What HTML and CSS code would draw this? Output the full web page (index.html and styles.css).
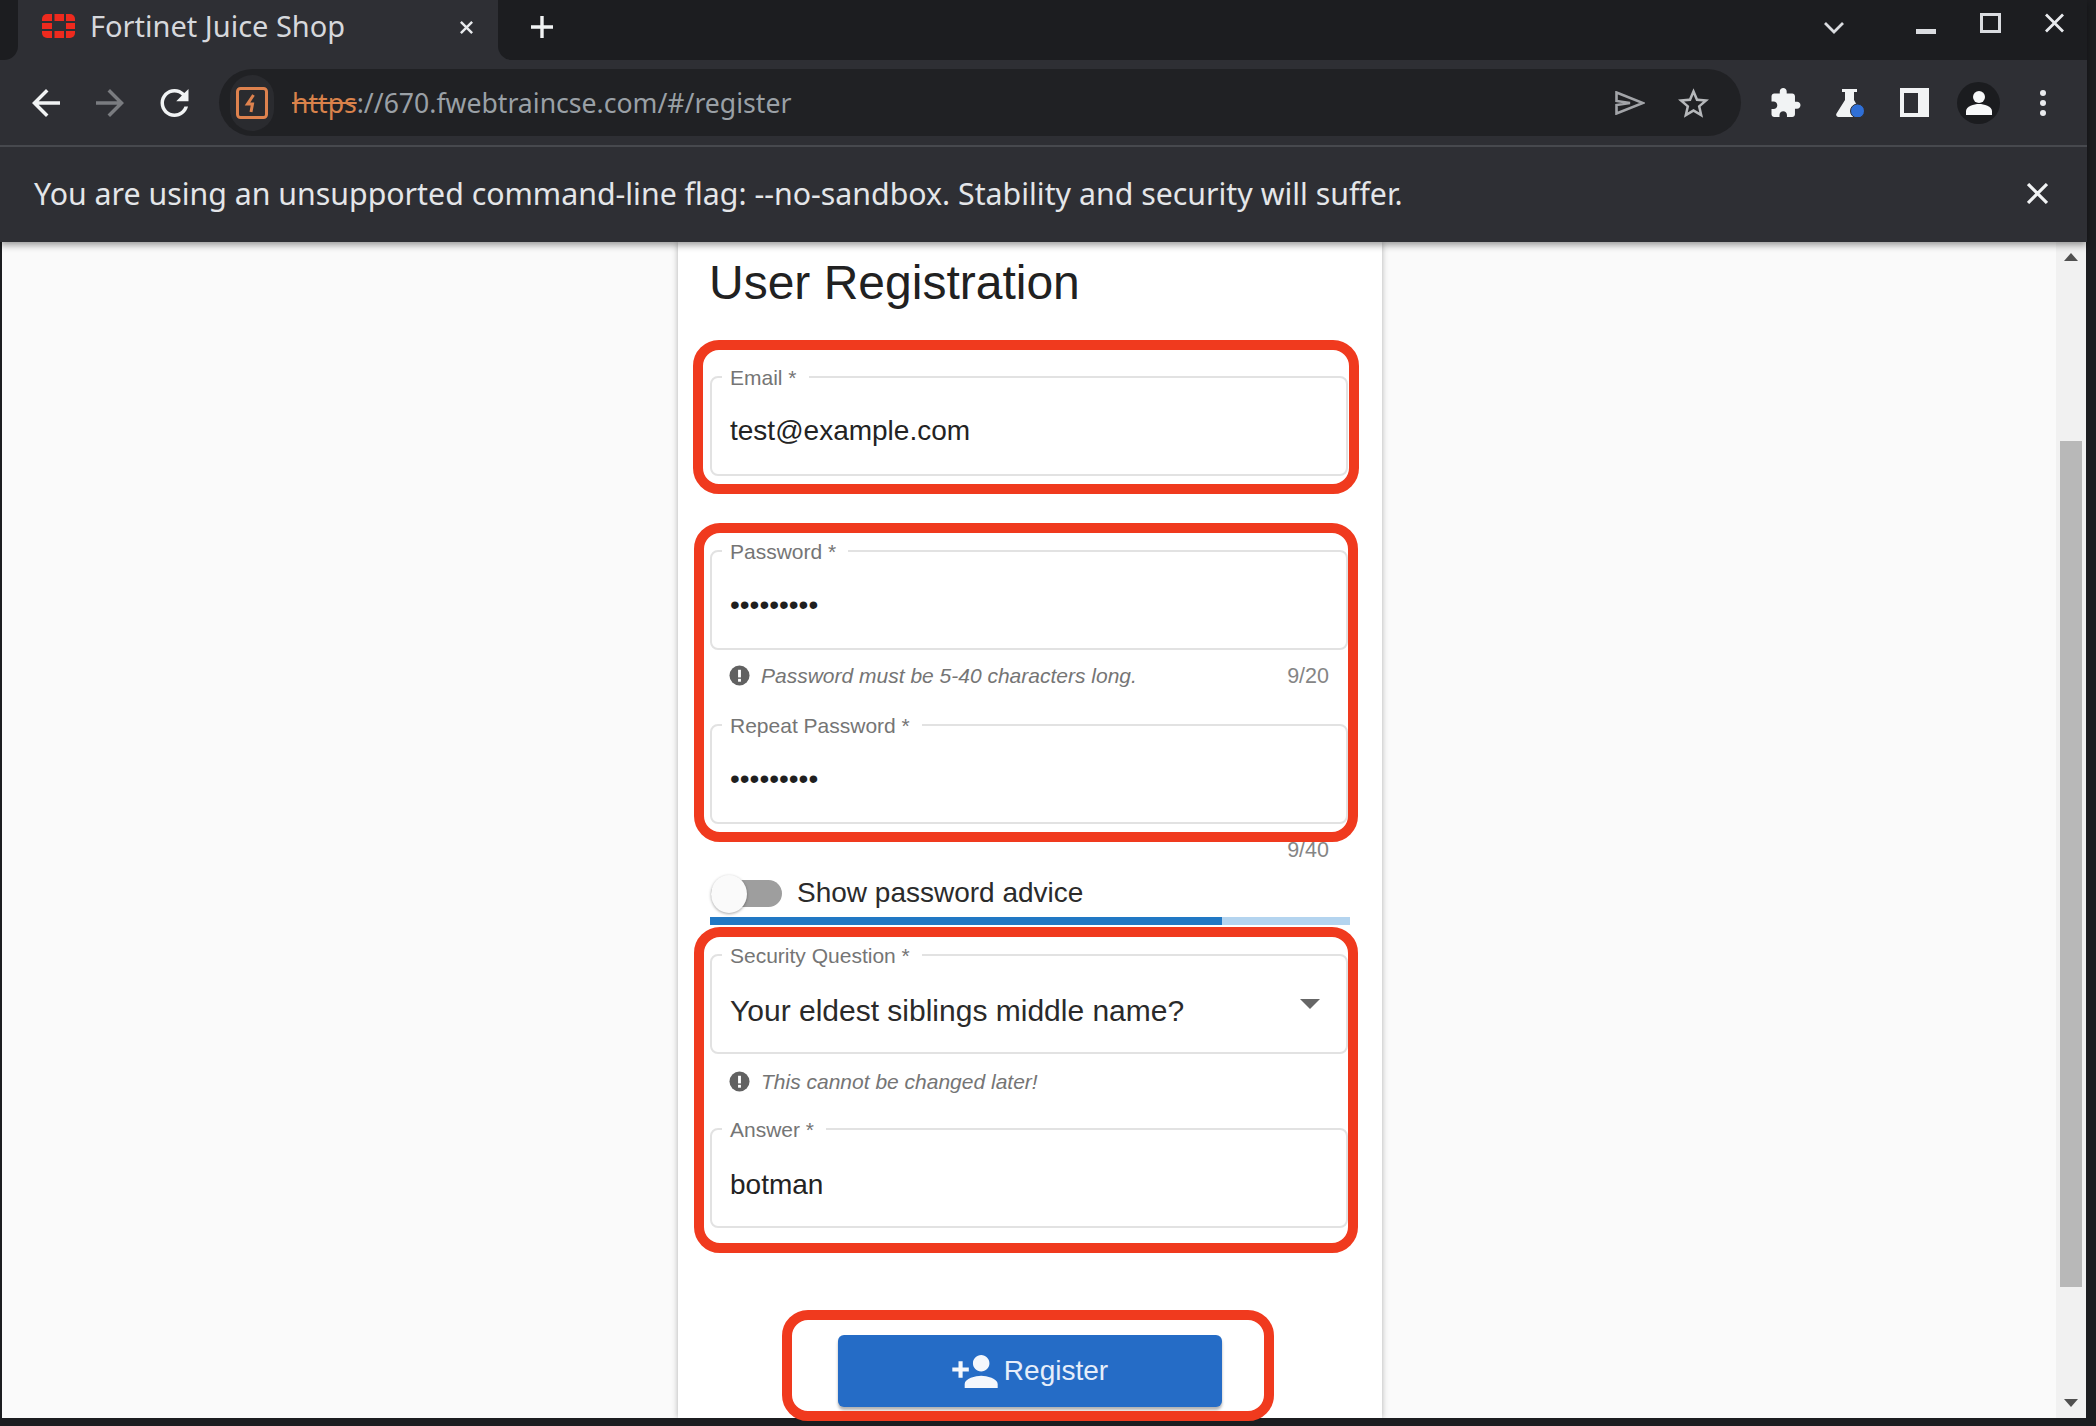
FILE: index.html
```html
<!DOCTYPE html>
<html lang="en">
<head>
<meta charset="utf-8">
<title>Fortinet Juice Shop</title>
<link rel="stylesheet" href="styles.css">
</head>
<body>
<div class="window">
  <header class="browser">
    <div class="tabstrip">
      <div class="strip-lead"></div>
      <div class="tab">
        <svg class="favicon" viewBox="0 0 33 24" aria-hidden="true">
          <g fill="#ee2a1e">
            <path d="M0 7V5a5 5 0 0 1 5-5h5v7H0z"/>
            <rect x="12.500" y="0" width="9.500" height="7"/>
            <path d="M33 7V5a5 5 0 0 0-5-5h-4v7h9z"/>
            <rect x="0" y="9" width="10" height="6"/>
            <rect x="24" y="9" width="9" height="6"/>
            <path d="M0 17v2a5 5 0 0 0 5 5h5v-7H0z"/>
            <rect x="12.500" y="17" width="9.500" height="7"/>
            <path d="M33 17v2a5 5 0 0 1-5 5h-4v-7h9z"/>
          </g>
        </svg>
        <span class="tab-title">Fortinet Juice Shop</span>
        <svg class="tab-close" viewBox="0 0 16 16" aria-hidden="true"><path d="M2 2l12 12M14 2L2 14"/></svg>
      </div>
      <div class="strip-rest">
        <svg class="new-tab" viewBox="0 0 24 24" aria-hidden="true"><path d="M12 1v22M1 12h22"/></svg>
        <div class="strip-controls">
          <svg class="tab-search" viewBox="0 0 20 12" aria-hidden="true"><path d="M1 1l9 9 9-9"/></svg>
          <svg class="win-min" viewBox="0 0 20 5" aria-hidden="true"><rect width="20" height="5"/></svg>
          <svg class="win-max" viewBox="0 0 21 20" aria-hidden="true"><path d="M1.500 1.500h18v17h-18z"/></svg>
          <svg class="win-close" viewBox="0 0 20 20" aria-hidden="true"><path d="M1 1l18 18M19 1L1 19"/></svg>
        </div>
      </div>
    </div>
    <div class="toolbar">
      <svg class="tool-icon nav-back" viewBox="4 4 16 16" aria-hidden="true"><path d="M20 11H7.830l5.590-5.590L12 4l-8 8 8 8 1.410-1.410L7.830 13H20v-2z"/></svg>
      <svg class="tool-icon nav-forward" viewBox="4 4 16 16" aria-hidden="true"><path d="M4 11h12.170l-5.590-5.590L12 4l8 8-8 8-1.410-1.410L16.170 13H4v-2z"/></svg>
      <svg class="tool-icon nav-reload" viewBox="4 4 16 16" aria-hidden="true"><path d="M17.650 6.350C16.200 4.900 14.210 4 12 4c-4.420 0-7.990 3.580-7.990 8s3.570 8 7.990 8c3.730 0 6.840-2.550 7.730-6h-2.080c-.82 2.330-3.040 4-5.650 4-3.310 0-6-2.690-6-6s2.690-6 6-6c1.660 0 3.140.69 4.220 1.780L13 11h7V4l-2.350 2.350z"/></svg>
      <div class="omnibox">
        <span class="site-chip">
          <svg class="site-icon" viewBox="0 0 32 32" aria-hidden="true">
            <rect class="site-frame" x="1.500" y="1.500" width="29" height="29" rx="3"/>
            <path class="site-bolt" d="M17.500 8l-6 9h5l-1.500 8"/>
          </svg>
        </span>
        <span class="url"><span class="url-scheme">https</span>://670.fwebtraincse.com/#/register</span>
        <svg class="omni-send" viewBox="0 0 30 24" aria-hidden="true"><path d="M1.500 1.500L28 12 1.500 22.500V14L15 12 1.500 10z"/></svg>
        <svg class="omni-star" viewBox="2 2 20 19" aria-hidden="true"><path d="M22 9.240l-7.190-.62L12 2 9.190 8.630 2 9.240l5.460 4.730L5.820 21 12 17.270 18.180 21l-1.630-7.030L22 9.240zM12 15.400l-3.760 2.270 1-4.280-3.320-2.880 4.380-.38L12 6.100l1.710 4.040 4.380.38-3.320 2.880 1 4.280L12 15.400z"/></svg>
      </div>
      <svg class="ext-puzzle" viewBox="2 1 21 21" aria-hidden="true"><path d="M20.500 11H19V7c0-1.100-.9-2-2-2h-4V3.500C13 2.120 11.880 1 10.500 1S8 2.120 8 3.500V5H4c-1.100 0-1.990.9-1.990 2v3.800H3.500c1.490 0 2.700 1.210 2.700 2.700s-1.210 2.700-2.700 2.700H2V20c0 1.100.9 2 2 2h3.800v-1.500c0-1.490 1.210-2.700 2.700-2.700 1.490 0 2.700 1.210 2.700 2.700V22H17c1.100 0 2-.9 2-2v-4h1.500c1.380 0 2.500-1.120 2.500-2.500S21.880 11 20.500 11z"/></svg>
      <svg class="ext-flask" viewBox="0 0 28 28" aria-hidden="true">
        <path class="flask-body" d="M6 0h15v3h-3v8l8 14c.8 1.500 0 3-1.500 3H2.500C.7 28-.5 26.300.5 24.500L9 11V3H6z"/>
        <circle class="flask-dot" cx="21.500" cy="22" r="7"/>
      </svg>
      <svg class="side-panel" viewBox="0 0 29 29" aria-hidden="true"><path d="M0 0h29v29H0zM4 5v20h14V5z" fill-rule="evenodd"/></svg>
      <span class="avatar">
        <svg class="avatar-icon" viewBox="0 0 26 24" aria-hidden="true"><circle cx="13" cy="6" r="6"/><path d="M0 24v-4c0-4.500 8-7 13-7s13 2.500 13 7v4z"/></svg>
      </span>
      <span class="kebab"><i></i><i></i><i></i></span>
    </div>
    <div class="infobar">
      <span class="info-text">You are using an unsupported command-line flag: --no-sandbox. Stability and security will suffer.</span>
      <svg class="info-close" viewBox="0 0 20 20" aria-hidden="true"><path d="M1 1l18 18M19 1L1 19"/></svg>
    </div>
  </header>
  <div class="viewport">
    <main class="page">
      <section class="card">
        <h1 class="title">User Registration</h1>

        <div class="field-group">
          <div class="field"><span class="field-label">Email *</span><span class="field-value">test@example.com</span></div>
          <div class="subscript"></div>
        </div>

        <div class="field-group">
          <div class="field"><span class="field-label">Password *</span><span class="field-value dots">•••••••••</span></div>
          <div class="subscript">
            <svg class="hint-icon" viewBox="0 0 22 22" aria-hidden="true"><circle cx="11" cy="11" r="10.500"/><rect class="hint-mark" x="9.500" y="5" width="3" height="8"/><rect class="hint-mark" x="9.500" y="14.500" width="3" height="3"/></svg>
            <span class="hint">Password must be 5-40 characters long.</span>
            <span class="counter">9/20</span>
          </div>
        </div>

        <div class="field-group">
          <div class="field"><span class="field-label">Repeat Password *</span><span class="field-value dots">•••••••••</span></div>
          <div class="subscript subscript-short"><span class="counter">9/40</span></div>
        </div>

        <div class="toggle-row">
          <span class="toggle"><span class="toggle-thumb"></span></span>
          <span class="toggle-label">Show password advice</span>
        </div>
        <div class="strength"><div class="strength-fill" style="width:80%"></div></div>

        <div class="field-group">
          <div class="field"><span class="field-label">Security Question *</span><span class="field-value select-value">Your eldest siblings middle name?</span><span class="select-arrow"></span></div>
          <div class="subscript subscript-low">
            <svg class="hint-icon" viewBox="0 0 22 22" aria-hidden="true"><circle cx="11" cy="11" r="10.500"/><rect class="hint-mark" x="9.500" y="5" width="3" height="8"/><rect class="hint-mark" x="9.500" y="14.500" width="3" height="3"/></svg>
            <span class="hint">This cannot be changed later!</span>
          </div>
        </div>

        <div class="field-group">
          <div class="field"><span class="field-label">Answer *</span><span class="field-value answer-value">botman</span></div>
        </div>

        <div class="actions">
          <button class="register" type="button">
            <svg class="register-icon" viewBox="1 4 22 16" aria-hidden="true"><path d="M15 12c2.210 0 4-1.790 4-4s-1.790-4-4-4-4 1.790-4 4 1.790 4 4 4zm-9-2V7H4v3H1v2h3v3h2v-3h3v-2H6zm9 4c-2.670 0-8 1.340-8 4v2h16v-2c0-2.660-5.330-4-8-4z"/></svg>
            <span>Register</span>
          </button>
        </div>
      </section>
    </main>
    <div class="scrollbar">
      <span class="scroll-up"></span>
      <span class="scroll-thumb"></span>
      <span class="scroll-down"></span>
    </div>
  </div>
  <div class="mark mark-email"></div>
  <div class="mark mark-password"></div>
  <div class="mark mark-security"></div>
  <div class="mark mark-button"></div>
</div>
</body>
</html>
```
FILE: styles.css
```css
* { box-sizing: border-box; }
html, body { margin: 0; padding: 0; height: 100%; overflow: hidden; background: #1c1d20; }
svg { display: block; flex: none; }

.window { position: relative; width: 2096px; height: 1426px; background: #1c1d20; font-family: "Liberation Sans", Arial, sans-serif; }

.browser { position: relative; z-index: 2; width: 2087px; font-family: "Noto Sans", "Open Sans", sans-serif; box-shadow: 0 3px 7px rgba(0,0,0,.4); }

.tabstrip { display: flex; height: 60px; background: #2e2f34; }
.strip-lead { width: 18px; background: #1c1d20; border-bottom-right-radius: 14px; }
.tab { width: 480px; display: flex; align-items: center; padding: 0 24px 9px 24px; }
.favicon { width: 33px; height: 24px; margin-top: 0; }
.tab-title { margin-left: 15px; font-size: 29px; color: #d6d8dc; white-space: nowrap; flex: 1; }
.tab-close { width: 15px; height: 15px; fill: none; stroke: #e8eaed; stroke-width: 2.600; margin-top: 3px; }
.strip-rest { flex: 1; display: flex; align-items: center; background: #1c1d20; border-bottom-left-radius: 14px; padding: 0 0 6px 32px; }
.new-tab { width: 24px; height: 24px; fill: none; stroke: #f1f3f4; stroke-width: 3.400; }
.strip-controls { margin-left: auto; display: flex; align-items: center; padding-right: 23px; }
.tab-search { width: 20px; height: 12px; fill: none; stroke: #dadce0; stroke-width: 2.800; margin-right: 72px; margin-top: 2px; }
.win-min { width: 20px; height: 5px; fill: #dadce0; margin-top: 9px; margin-right: 44px; }
.win-max { width: 21px; height: 20px; fill: none; stroke: #dadce0; stroke-width: 3; margin-top: -8px; margin-right: 44px; }
.win-close { width: 19px; height: 20px; fill: none; stroke: #e8eaed; stroke-width: 3; margin-top: -8px; }

.toolbar { display: flex; align-items: center; height: 87px; padding: 0 0 0 32px; background: #2e2f34; border-bottom: 2px solid #47494e; position: relative; }
.tool-icon { width: 28px; height: 28px; fill: #f1f3f4; }
.nav-forward { margin-left: 36px; fill: #7a7c80; }
.nav-reload { margin-left: 36px; width: 29px; }
.omnibox { margin-left: 30px; width: 1522px; height: 67px; border-radius: 34px; background: #202124; display: flex; align-items: center; }
.site-chip { width: 44px; height: 56px; margin-left: 11px; border-radius: 22px; background: #2a2b2f; display: flex; align-items: center; justify-content: center; flex: none; }
.site-icon { width: 32px; height: 32px; }
.site-frame { fill: none; stroke: #de824e; stroke-width: 3; }
.site-bolt { fill: none; stroke: #de824e; stroke-width: 3; }
.url { margin-left: 18px; font-size: 26.600px; color: #9aa0a6; white-space: nowrap; flex: 1; }
.url-scheme { color: #d9824b; text-decoration: line-through; }
.omni-send { width: 30px; height: 24px; fill: none; stroke: #a2a4a8; stroke-width: 2.600; margin-right: 33px; margin-top: 1px; }
.omni-star { width: 31px; height: 30px; fill: #b6b8bb; margin-right: 32px; }
.ext-puzzle { width: 30px; height: 29px; fill: #f1f3f4; margin-left: 30px; }
.ext-flask { width: 28px; height: 28px; margin-left: 35px; }
.flask-body { fill: #f1f3f4; }
.flask-dot { fill: #2f6fd6; stroke: #2e2f34; stroke-width: 1; }
.side-panel { width: 29px; height: 29px; fill: #f1f3f4; margin-left: 36px; }
.avatar { width: 43px; height: 42px; margin-left: 28px; border-radius: 50%; background: #1b1c1f; display: flex; align-items: center; justify-content: center; flex: none; }
.avatar-icon { width: 26px; height: 24px; fill: #f8f9fa; }
.kebab { margin-left: 40px; display: flex; flex-direction: column; gap: 4px; }
.kebab i { display: block; width: 6px; height: 6px; border-radius: 50%; background: #e8eaed; }

.infobar { display: flex; align-items: center; height: 95px; padding: 0 39px 2px 34px; background: #2e2f34; position: relative; }
.info-text { flex: 1; font-size: 30.300px; color: #e4e6e9; white-space: nowrap; }
.info-close { width: 21px; height: 21px; fill: none; stroke: #f1f3f4; stroke-width: 3; }

.viewport { display: flex; height: 1176px; margin-left: 2px; width: 2084px; overflow: hidden; background: #fafafa; }
.page { flex: 1; display: flex; justify-content: center; padding-left: 2px; }
.card { width: 704px; height: 1176px; padding: 9px 32px 0; background: #fff; box-shadow: 0 0 6px rgba(0,0,0,.3); }
.title { margin: 0 0 61px -1px; font-size: 48px; line-height: 64px; font-weight: 400; color: #212121; }

.field-group { width: 640px; }
.field { position: relative; height: 100px; margin-right: 2px; border: 2px solid #e2e2e2; border-radius: 8px; display: flex; align-items: center; padding: 0 17px 0 18px; }
.field-label { position: absolute; top: -12px; left: 10px; padding: 0 12px 0 8px; background: #fff; font-size: 21px; line-height: 24px; color: #757575; white-space: nowrap; }
.field-value { font-size: 28px; line-height: 36px; color: #232323; margin-top: 10px; white-space: nowrap; }
.dots { color: #1f1f1f; }
.answer-value { margin-top: 13px; }
.select-value { font-size: 30px; margin-top: 14px; color: #2a2a2a; }
.select-arrow { margin-left: auto; margin-right: 9px; margin-top: 0; width: 0; height: 0; border-left: 10px solid transparent; border-right: 10px solid transparent; border-top: 10px solid #666; }

.subscript { height: 74px; display: flex; align-items: flex-start; padding: 15px 21px 0 19px; }
.subscript-short { height: 50px; }
.subscript-low { padding-top: 17px; }
.hint-icon { width: 21px; height: 21px; fill: #616161; }
.hint-mark { fill: #fff; }
.hint { margin-left: 11px; font-size: 21px; line-height: 22px; font-style: italic; color: #757575; white-space: nowrap; }
.counter { margin-left: auto; font-size: 21.500px; line-height: 22px; color: #858585; }

.toggle-row { display: flex; align-items: center; height: 38px; }
.toggle { position: relative; width: 71px; height: 27px; display: block; flex: none; margin-left: 1px; background: #9e9e9e; border-radius: 14px; }
.toggle-thumb { position: absolute; left: 0; top: -5px; width: 36px; height: 38px; border-radius: 50%; background: #fafafa; box-shadow: 0 1px 3px rgba(0,0,0,.35); }
.toggle-label { margin-left: 15px; font-size: 28px; line-height: 36px; color: #2b2b2b; white-space: nowrap; }

.strength { height: 8px; margin: 5px 0 29px; background: #b4d4ef; }
.strength-fill { height: 100%; background: #2178c4; }

.actions { display: flex; justify-content: center; margin-top: 107px; }
.register { display: flex; align-items: center; justify-content: center; gap: 6px; width: 384px; height: 72px; border: 0; border-radius: 6px; background: #256cc6; color: #e6eefa; font-family: inherit; font-size: 28px; box-shadow: 0 3px 3px rgba(0,0,0,.3); padding: 0; }
.register-icon { width: 46px; height: 33px; fill: #f4f7fc; }

.scrollbar { width: 30px; flex: none; background: #f1f1f1; display: flex; flex-direction: column; align-items: center; position: relative; }
.scroll-up { margin-top: 11px; width: 0; height: 0; border-left: 7.500px solid transparent; border-right: 7.500px solid transparent; border-bottom: 8px solid #505050; }
.scroll-thumb { margin-top: 180px; width: 22px; height: 846px; background: #b8b8b8; }
.scroll-down { margin-top: auto; margin-bottom: 11px; width: 0; height: 0; border-left: 7.500px solid transparent; border-right: 7.500px solid transparent; border-top: 8px solid #505050; }

.mark { position: absolute; z-index: 3; border: 10px solid #f03a1e; border-radius: 26px; pointer-events: none; }
.mark-email { left: 693px; top: 340px; width: 666px; height: 154px; }
.mark-password { left: 694px; top: 523px; width: 664px; height: 319px; }
.mark-security { left: 694px; top: 927px; width: 664px; height: 326px; }
.mark-button { left: 782px; top: 1310px; width: 492px; height: 111px; }
```
